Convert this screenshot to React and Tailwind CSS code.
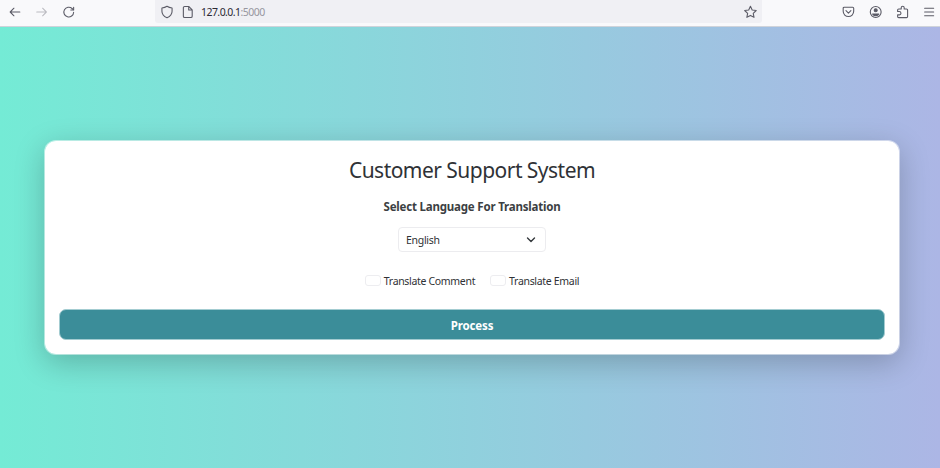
import React from "react";

const Icon = ({ className, children }) => (
  <svg
    viewBox="0 0 16 16"
    className={className}
    fill="none"
    stroke="currentColor"
    strokeWidth="1.250"
    strokeLinecap="round"
    strokeLinejoin="round"
  >
    {children}
  </svg>
);

function Toolbar() {
  return (
    <header className="flex h-[27px] items-start border-b border-[#cfd3da] bg-[#f9f9fb] text-[#5b5b66]">
      <div className="flex h-[23px] w-[155px] items-center gap-[13px] pl-2">
        <Icon className="h-3.5 w-3.5">
          <path d="M13.500 8H2.500M6.800 3.700 2.500 8l4.300 4.300" />
        </Icon>
        <Icon className="h-3.5 w-3.5 text-[#bcbcc2]">
          <path d="M2 8h11M8.700 3.700 13 8l-4.300 4.300" />
        </Icon>
        <Icon className="h-3.5 w-3.5">
          <path d="M13.300 8.300A5.600 5.600 0 1 1 11.500 4l1.400 1.300" />
          <path d="M13.300 2.500v3.200h-3.200" />
        </Icon>
      </div>
      <div className="flex h-[23px] w-[607px] items-center rounded-b-[3px] bg-[#f0f0f4] pl-[5px] pr-[5px]">
        <Icon className="h-3.5 w-3.5">
          <path d="M8 1.500c1.800 1.200 3.600 1.700 5.800 1.900V7c0 3.600-2.400 6-5.800 7.600C4.600 13 2.200 10.600 2.200 7V3.400C4.400 3.200 6.200 2.700 8 1.500Z" />
        </Icon>
        <Icon className="ml-[7px] h-3.5 w-3.5">
          <path d="M2.700 3.200a1.500 1.500 0 0 1 1.500-1.500h4.600l4 4v7.100a1.500 1.500 0 0 1-1.500 1.500H4.200a1.500 1.500 0 0 1-1.500-1.500ZM8.800 1.900v3.800h3.800" />
        </Icon>
        <span className="ml-[6px] mt-px text-[10.500px] leading-none tracking-[-0.55px] text-[#2b2a33]">
          127.0.0.1<span className="text-[#97979f]">:5000</span>
        </span>
        <Icon className="ml-auto h-3.5 w-3.5">
          <path d="m8.500 1.500 2 4.200 4.600.6-3.400 3.200.9 4.600-4.100-2.200-4.100 2.200.9-4.600L1.900 6.300l4.600-.6Z" />
        </Icon>
      </div>
      <div className="flex h-[23px] flex-1 items-center justify-end gap-[13px] pr-1">
        <Icon className="h-3.5 w-3.5">
          <path d="M3.700 2.500h9.600a1.200 1.200 0 0 1 1.200 1.200v3.500a6 6 0 0 1-12 0V3.700a1.200 1.200 0 0 1 1.200-1.200ZM5.700 6.500l2.800 2.700 2.800-2.700" />
        </Icon>
        <Icon className="h-3.5 w-3.5">
          <circle cx="8.800" cy="8" r="6.200" />
          <circle cx="8.800" cy="6" r="1.700" fill="currentColor" />
          <path d="M5.300 10.300h7c-.6 1.400-2 2-3.500 2s-2.900-.6-3.500-2Z" fill="currentColor" />
        </Icon>
        <Icon className="h-3.5 w-3.5">
          <path d="M3 7.500V5.800a1.200 1.200 0 0 1 1.200-1.200h2.900V3.200a1.700 1.700 0 0 1 3.400 0v1.400h2.700a1.200 1.200 0 0 1 1.200 1.200v7.400a1.200 1.200 0 0 1-1.200 1.200h-9A1.200 1.200 0 0 1 3 13.200v-1.900h1.900a1.800 1.800 0 0 0 0-3.800Z" />
        </Icon>
        <Icon className="h-3.5 w-3.5">
          <path d="M3 3.700h10.300M3 8h10.300M3 12.300h10.300" />
        </Icon>
      </div>
    </header>
  );
}

const Check = ({ children }) => (
  <label className="flex items-center">
    <span className="mt-[-4px] h-[11px] w-4 rounded-[3px] border border-[#ededf0]" />
    <span className="ml-[3px] whitespace-nowrap tracking-[-0.32px]">{children}</span>
  </label>
);

export default function App() {
  return (
    <div className="flex h-[468px] w-[940px] flex-col overflow-hidden font-['Noto_Sans',sans-serif]">
      <Toolbar />
      <main className="flex-1 bg-linear-to-r/srgb from-[#74ebd5] to-[#acb6e5] pl-11 pt-[113px]">
        <section className="flex h-[215px] w-[856px] flex-col items-center rounded-xl border border-white/50 bg-white bg-clip-padding px-3.5 text-[#2f3236] shadow-[0_8px_30px_rgba(0,0,0,0.22)]">
          <h1 className="mt-[14px] text-[21px] leading-[30px] tracking-[-0.53px]">Customer Support System</h1>
          <h2 className="mt-[13px] text-[11.500px] font-bold leading-[18px] tracking-[-0.2px] text-[#3c3f43]">
            Select Language For Translation
          </h2>
          <div className="mt-[11px] flex h-[25px] w-[148px] items-center justify-between rounded-[4px] border border-[#ececef] pl-[7px] pr-[9px] text-[10.500px] tracking-[-0.3px]">
            <span className="mt-0.5">English</span>
            <svg viewBox="0 0 10 6" className="h-[6px] w-2.5" fill="none" stroke="#34383c" strokeWidth="1.400" strokeLinecap="round" strokeLinejoin="round">
              <path d="m1.500 1 3.500 3.500L8.500 1" />
            </svg>
          </div>
          <div className="mt-[21px] flex h-[18px] items-center gap-[15px] text-[10.500px]">
            <Check>Translate Comment</Check>
            <Check>Translate Email</Check>
          </div>
          <button className="mt-[18px] h-[31px] w-full rounded-[7px] border border-[#a3ccd1] bg-[#3b8d99] pt-0.5 text-[11.500px] font-bold tracking-[-0.15px] text-white">
            Process
          </button>
        </section>
      </main>
    </div>
  );
}
